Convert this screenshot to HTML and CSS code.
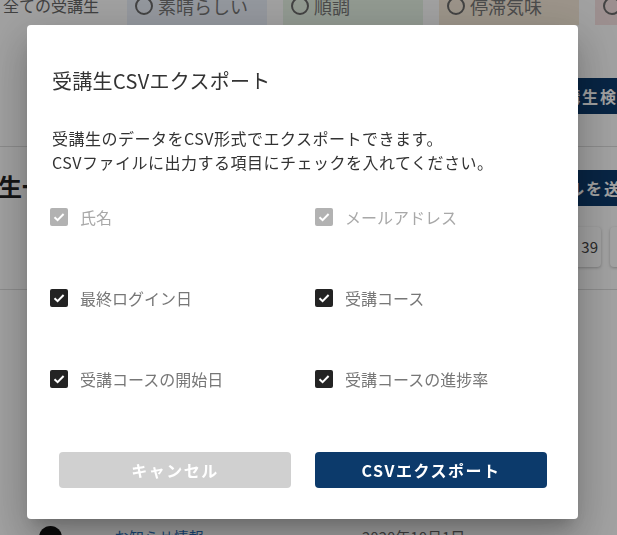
FILE: index.html
```html
<!DOCTYPE html>
<html lang="ja">
<head>
    <meta charset="UTF-8">
    <meta name="viewport" content="width=device-width, initial-scale=1.0">
    <title>受講生CSVエクスポート</title>
    <link rel="stylesheet" href="styles.css">
</head>
<body>
    <div class="page">
        <div class="filters">
            <span class="filter-label">全ての受講生</span>
            <span class="pill pill-great"><i class="radio"></i>素晴らしい</span>
            <span class="pill pill-good"><i class="radio"></i>順調</span>
            <span class="pill pill-slow"><i class="radio"></i>停滞気味</span>
            <span class="pill pill-bad"><i class="radio"></i>要注意</span>
        </div>

        <div class="toolbar">
            <button class="navy-btn search-btn">受講生検索</button>
        </div>

        <div class="list-head">
            <h2>生一覧</h2>
            <button class="navy-btn mail-btn">メールを送信</button>
        </div>

        <div class="pager">
            <span class="page-btn">39</span>
            <span class="page-btn">40</span>
        </div>

        <div class="student-row">
            <span class="avatar"></span>
            <span class="student-link">お知らせ情報</span>
            <span class="student-meta">2020年10月1日</span>
        </div>
    </div>

    <div class="backdrop"></div>

    <div class="dialog">
        <h1 class="dialog-title">受講生CSVエクスポート</h1>
        <p class="dialog-text">
            受講生のデータをCSV形式でエクスポートできます。<br>
            CSVファイルに出力する項目にチェックを入れてください。
        </p>

        <div class="fields">
            <label class="field disabled">
                <span class="box"><svg viewBox="0 0 18 18"><polyline points="4.5,9.2 7.6,12.2 13.6,6"/></svg></span>
                氏名
            </label>
            <label class="field disabled">
                <span class="box"><svg viewBox="0 0 18 18"><polyline points="4.5,9.2 7.6,12.2 13.6,6"/></svg></span>
                メールアドレス
            </label>
            <label class="field">
                <span class="box"><svg viewBox="0 0 18 18"><polyline points="4.5,9.2 7.6,12.2 13.6,6"/></svg></span>
                最終ログイン日
            </label>
            <label class="field">
                <span class="box"><svg viewBox="0 0 18 18"><polyline points="4.5,9.2 7.6,12.2 13.6,6"/></svg></span>
                受講コース
            </label>
            <label class="field">
                <span class="box"><svg viewBox="0 0 18 18"><polyline points="4.5,9.2 7.6,12.2 13.6,6"/></svg></span>
                受講コースの開始日
            </label>
            <label class="field">
                <span class="box"><svg viewBox="0 0 18 18"><polyline points="4.5,9.2 7.6,12.2 13.6,6"/></svg></span>
                受講コースの進捗率
            </label>
        </div>

        <div class="actions">
            <button class="btn btn-cancel">キャンセル</button>
            <button class="btn btn-export">CSVエクスポート</button>
        </div>
    </div>
</body>
</html>
```

FILE: styles.css
```css
* {
    margin: 0;
    padding: 0;
    box-sizing: border-box;
}

body {
    font-family: "Noto Sans CJK JP", "Noto Sans", sans-serif;
    background-color: #ffffff;
    color: #333333;
    overflow: hidden;
    height: 535px;
}

/* page behind the dialog */
.page {
    width: 617px;
    overflow: hidden;
}

.filters {
    display: flex;
    gap: 16px;
    height: 25px;
    align-items: flex-end;
}

.filter-label {
    flex: 0 0 111px;
    padding-left: 3px;
    font-size: 16px;
    line-height: 22px;
    color: #666666;
    margin-bottom: 9px;
}

.pill {
    flex: 0 0 140px;
    height: 40px;
    display: flex;
    align-items: center;
    gap: 5px;
    padding: 2px 0 0 8px;
    font-size: 18px;
    color: #777777;
}

.radio {
    width: 18px;
    height: 18px;
    border: 2px solid #6a6a6a;
    border-radius: 50%;
}

.pill-great { background-color: #ebf1fb; }
.pill-good { background-color: #e7f4e6; }
.pill-slow { background-color: #f7ebda; }
.pill-bad { background-color: #f8e2e2; }

.toolbar {
    display: flex;
    justify-content: flex-end;
    padding-top: 53px;
    height: 122px;
    border-bottom: 1px solid #dddddd;
}

.navy-btn {
    height: 36px;
    padding: 0 16px;
    background-color: #0c3a6b;
    color: #ffffff;
    border: none;
    border-radius: 4px;
    font-family: inherit;
    font-size: 16px;
    font-weight: bold;
    letter-spacing: 2px;
}

.search-btn {
    margin-right: -35px;
}

.mail-btn {
    margin-right: -39px;
}

.list-head {
    display: flex;
    justify-content: space-between;
    align-items: flex-start;
    padding-top: 23px;
    height: 80px;
}

.list-head h2 {
    font-size: 24px;
    line-height: 32px;
    color: #222222;
    margin-left: -2px;
}

.pager {
    display: flex;
    justify-content: flex-end;
    gap: 9px;
    height: 63px;
    margin-right: -43px;
    border-bottom: 1px solid #dddddd;
}

.page-btn {
    width: 50px;
    height: 40px;
    line-height: 40px;
    text-align: right;
    padding-right: 3px;
    font-size: 15px;
    color: #444444;
    background-color: #ffffff;
    border-radius: 4px;
    box-shadow: 0 1px 3px rgba(0, 0, 0, 0.25);
}

.student-row {
    display: flex;
    align-items: flex-start;
    padding: 236px 0 0 39px;
    font-size: 15px;
}

.avatar {
    width: 23px;
    height: 23px;
    border-radius: 50%;
    background-color: #111111;
}

.student-link {
    margin-left: 52px;
    color: #2a6db8;
    width: 248px;
}

.student-meta {
    color: #666666;
}

/* modal */
.backdrop {
    position: fixed;
    inset: 0;
    background-color: rgba(0, 0, 0, 0.37);
}

.dialog {
    position: fixed;
    left: 27px;
    top: 25px;
    width: 551px;
    height: 494px;
    background-color: #ffffff;
    border-radius: 4px;
    padding-top: 40px;
    box-shadow: 0 11px 15px -7px rgba(0, 0, 0, 0.2),
                0 24px 38px 3px rgba(0, 0, 0, 0.14),
                0 9px 46px 8px rgba(0, 0, 0, 0.12);
}

.dialog-title {
    padding-left: 25px;
    font-size: 20px;
    line-height: 32px;
    font-weight: normal;
    color: #333333;
    letter-spacing: 0.3px;
}

.dialog-text {
    margin-top: 29px;
    padding-left: 25px;
    font-size: 16px;
    line-height: 24px;
    color: #333333;
    letter-spacing: 0.5px;
}

.fields {
    display: grid;
    grid-template-columns: 265px 1fr;
    row-gap: 57px;
    margin-top: 31px;
    padding-left: 23px;
}

.field {
    display: flex;
    align-items: center;
    gap: 12px;
    font-size: 16px;
    line-height: 24px;
    color: #777777;
}

.box {
    width: 18px;
    height: 18px;
    border-radius: 2px;
    background-color: #232323;
    display: flex;
}

.box svg {
    width: 18px;
    height: 18px;
    fill: none;
    stroke: #ffffff;
    stroke-width: 2;
}

.field.disabled {
    color: #a8a8a8;
}

.field.disabled .box {
    background-color: #b2b2b2;
}

.actions {
    display: grid;
    grid-template-columns: 1fr 1fr;
    gap: 24px;
    margin-top: 61px;
    padding: 0 31px 0 32px;
}

.btn {
    height: 36px;
    border: none;
    border-radius: 4px;
    color: #ffffff;
    font-family: inherit;
    font-size: 16px;
    font-weight: bold;
    letter-spacing: 1.5px;
}

.btn-cancel {
    background-color: #d0d0d0;
}

.btn-export {
    background-color: #0c3a6b;
}
```
